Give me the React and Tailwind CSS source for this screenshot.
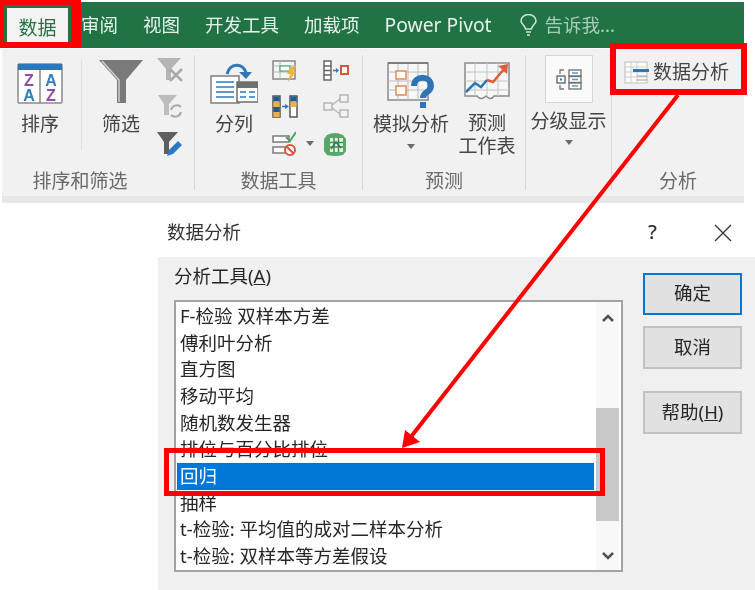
import React from "react";

const FONT = { fontFamily: '"Noto Sans", "Noto Sans CJK SC", sans-serif' };

const rows = [
  "F-检验 双样本方差",
  "傅利叶分析",
  "直方图",
  "移动平均",
  "随机数发生器",
  "排位与百分比排位",
  "回归",
  "抽样",
  "t-检验: 平均值的成对二样本分析",
  "t-检验: 双样本等方差假设",
];

const Caret = () => (
  <svg width="10" height="6" viewBox="0 0 10 6">
    <polygon points="1,0 9,0 5,5" fill="#6a6a6a" />
  </svg>
);

const SortIcon = () => (
  <svg width="46" height="41" viewBox="0 0 46 41">
    <rect x="1" y="1" width="44" height="39" rx="1" fill="#fff" stroke="#8a8a8a" strokeWidth="1.5" />
    <rect x="1" y="1" width="44" height="6" fill="#2f78b7" />
    <line x1="23" y1="7" x2="23" y2="40" stroke="#8a8a8a" strokeWidth="1.5" />
    <text x="12" y="23" textAnchor="middle" fontSize="16" fontWeight="700" fontFamily="Liberation Sans" fill="#8e4ea3">Z</text>
    <text x="12" y="38" textAnchor="middle" fontSize="16" fontWeight="700" fontFamily="Liberation Sans" fill="#2f7fc2">A</text>
    <text x="34" y="23" textAnchor="middle" fontSize="16" fontWeight="700" fontFamily="Liberation Sans" fill="#2f7fc2">A</text>
    <text x="34" y="38" textAnchor="middle" fontSize="16" fontWeight="700" fontFamily="Liberation Sans" fill="#8e4ea3">Z</text>
  </svg>
);

const FunnelIcon = () => (
  <svg width="44" height="44" viewBox="0 0 44 44">
    <polygon points="0,0 44,0 27,20 27,43 18,43 18,20" fill="#7a7a7a" />
    <polyline points="3,1 20,20 20,42" fill="none" stroke="#cfcfcf" strokeWidth="1.5" />
  </svg>
);

const ClearFilter = () => (
  <svg width="26" height="24" viewBox="0 0 26 24">
    <polygon points="0,0 24,0 14,11 14,22 9,22 9,11" fill="#b4b4b4" />
    <path d="M13 11 L25 23 M25 11 L13 23" stroke="#a8a8a8" strokeWidth="2.5" />
  </svg>
);

const RefreshFilter = () => (
  <svg width="26" height="24" viewBox="0 0 26 24">
    <polygon points="1,0 20,0 12,9 12,20 7,20 7,9" fill="#bcbcbc" />
    <path d="M14 15 a6 6 0 0 1 10 -3 M24 17 a6 6 0 0 1 -10 3" fill="none" stroke="#a8a8a8" strokeWidth="2" />
  </svg>
);

const EditFilter = () => (
  <svg width="26" height="26" viewBox="0 0 26 26">
    <polygon points="0,0 21,0 12,10 12,22 7,22 7,10" fill="#5f5f5f" />
    <path d="M10 24 L12 18 L21 9 L25 13 L16 22 Z" fill="#2f78c4" />
  </svg>
);

const TextToColumns = () => (
  <svg width="48" height="42" viewBox="0 0 48 42">
    <path d="M17 12 C20 1 33 0 36 11" fill="none" stroke="#2f78b7" strokeWidth="3" />
    <polygon points="29,10 42,10 36,17" fill="#2f78b7" />
    <rect x="1" y="14" width="28" height="27" fill="#fff" stroke="#7f7f7f" strokeWidth="1.5" />
    <path d="M6 20 H24 M6 25 H24 M6 30 H24 M6 35 H24" stroke="#2f78b7" strokeWidth="1.5" />
    <rect x="27" y="20" width="21" height="20" fill="#fff" stroke="#6f6f6f" strokeWidth="1.5" />
    <rect x="27" y="20" width="21" height="6" fill="#6f6f6f" />
    <path d="M30 30 H36 M39 30 H45 M30 35 H36 M39 35 H45" stroke="#5b9bd5" strokeWidth="2" />
  </svg>
);

const FlashFill = () => (
  <svg width="25" height="22" viewBox="0 0 25 22">
    <rect x="1" y="1" width="22" height="18" fill="#f5f5f5" stroke="#858585" strokeWidth="1.5" />
    <path d="M1 6 H23 M1 12 H23 M8 1 V19" stroke="#b5b5b5" />
    <rect x="8" y="6" width="10" height="5" fill="#fff" stroke="#2e9a62" />
    <polygon points="20,6 24,6 21,12 24,12 16,22 18,14 15,14" fill="#f0b33c" />
  </svg>
);

const RemoveDuplicates = () => (
  <svg width="26" height="23" viewBox="0 0 26 23">
    <rect x="1" y="1" width="7" height="21" fill="#fff" stroke="#555" strokeWidth="1.5" />
    <rect x="18" y="1" width="7" height="21" fill="#fff" stroke="#555" strokeWidth="1.5" />
    <rect x="1.5" y="1.5" width="6" height="5" fill="#1f5d93" />
    <rect x="1.5" y="7" width="6" height="5" fill="#efb04a" />
    <rect x="1.5" y="12" width="6" height="5" fill="#1f5d93" />
    <rect x="1.5" y="17" width="6" height="5" fill="#efb04a" />
    <rect x="18.5" y="1.5" width="6" height="5" fill="#1f5d93" />
    <rect x="18.5" y="7" width="6" height="5" fill="#efb04a" />
    <path d="M10 11.5 H14" stroke="#2f78b7" strokeWidth="1.5" />
    <polygon points="13,9 17,11.5 13,14" fill="#2f78b7" />
  </svg>
);

const Validation = () => (
  <svg width="24" height="25" viewBox="0 0 24 25">
    <rect x="1" y="5" width="16" height="6" fill="#fff" stroke="#7a7a7a" strokeWidth="1.5" />
    <rect x="1" y="16" width="16" height="6" fill="#fff" stroke="#7a7a7a" strokeWidth="1.5" />
    <path d="M14 6 L18 10 L24 1" fill="none" stroke="#4aa564" strokeWidth="2" />
    <circle cx="18" cy="19" r="5" fill="#fff" stroke="#d9553b" strokeWidth="2" />
    <path d="M14.5 15.5 L21.5 22.5" stroke="#d9553b" strokeWidth="2" />
  </svg>
);

const Consolidate = () => (
  <svg width="26" height="21" viewBox="0 0 26 21">
    <rect x="1" y="1" width="7" height="19" fill="#fff" stroke="#666" strokeWidth="1.5" />
    <path d="M1 6 H8 M1 10.5 H8 M1 15 H8" stroke="#666" strokeWidth="1.5" />
    <path d="M10 10.5 H14" stroke="#2f78b7" strokeWidth="1.5" />
    <polygon points="13,8 16,10.5 13,13" fill="#2f78b7" />
    <rect x="18" y="6" width="7" height="8" fill="#fff" stroke="#d9553b" strokeWidth="2" />
  </svg>
);

const Relations = () => (
  <svg width="26" height="25" viewBox="0 0 26 25">
    <g fill="#f3f3f3" stroke="#b5b5b5" strokeWidth="1.5">
      <rect x="1" y="9" width="8" height="7" />
      <rect x="17" y="1" width="8" height="7" />
      <rect x="17" y="16" width="8" height="7" />
    </g>
    <path d="M9 11 L17 5 M9 14 L17 20" stroke="#b5b5b5" strokeWidth="1.5" />
  </svg>
);

const DataModel = () => (
  <svg width="24" height="25" viewBox="0 0 24 25">
    <path d="M4 3 Q12 -1 20 3 L23 7 V19 L20 23 Q12 25 4 23 L1 19 V7 Z" fill="#56a868" />
    <path d="M7 6 H20 V20 H7 Z" fill="#e6f2e8" />
    <path d="M11 6 V20 M15.5 6 V20 M7 10.5 H20 M7 15 H20" stroke="#3f8f52" strokeWidth="1.5" />
    <path d="M8 17 L13 10 L18 16" fill="none" stroke="#2f7d44" strokeWidth="1.5" />
  </svg>
);

const WhatIf = () => (
  <svg width="48" height="47" viewBox="0 0 48 47">
    <rect x="1" y="1" width="40" height="37" fill="#f7f7f7" stroke="#8a8a8a" strokeWidth="1.5" />
    <path d="M1 10 H41 M1 19 H41 M1 28 H41 M11 1 V38 M21 1 V38 M31 1 V38" stroke="#bdbdbd" />
    <path d="M1 1 H41" stroke="#7f7f7f" strokeWidth="2" />
    <rect x="9" y="9" width="10" height="8" fill="#fff" stroke="#e58a4e" strokeWidth="1.5" />
    <rect x="9" y="24" width="10" height="9" fill="#fff" stroke="#e58a4e" strokeWidth="1.5" />
    <path d="M27 24 C27 13 44 13 44 24 C44 31 36 29 36 36" fill="none" stroke="#2e75b6" strokeWidth="6" />
    <rect x="33" y="40" width="6" height="6" fill="#2e75b6" />
  </svg>
);

const Forecast = () => (
  <svg width="46" height="42" viewBox="0 0 46 42">
    <path d="M1 1 H45 V34 H30 Q27 39 22 34 Q17 39 13 34 H1 Z" fill="#f7f7f7" stroke="#8a8a8a" strokeWidth="1.5" />
    <path d="M1 10 H45 M1 19 H45 M1 28 H45 M11 1 V34 M23 1 V34 M34 1 V34" stroke="#c4c4c4" />
    <path d="M2 30 L11 21 L17 25 L23 18" fill="none" stroke="#2e75b6" strokeWidth="2.5" />
    <path d="M23 18 L29 20 L41 6" fill="none" stroke="#d9603b" strokeWidth="2.5" />
    <polygon points="34,4 44,2 43,12" fill="#d9603b" />
  </svg>
);

const Outline = () => (
  <svg width="26" height="21" viewBox="0 0 26 21">
    <path d="M8 1 H4 V5 M8 20 H4 V16" fill="none" stroke="#7a7a7a" strokeWidth="1.3" />
    <rect x="1" y="7" width="8" height="7" fill="#fff" stroke="#5f5f5f" strokeWidth="1.3" />
    <rect x="4" y="9.5" width="2" height="2" fill="#2e75b6" />
    <g fill="#fff" stroke="#6f6f6f" strokeWidth="1.3">
      <rect x="13" y="1" width="12" height="6" />
      <rect x="13" y="7.5" width="12" height="6" />
      <rect x="13" y="14" width="12" height="6" />
    </g>
    <path d="M16 4 H22 M16 10.5 H22 M16 17 H22" stroke="#5b9bd5" strokeWidth="1.6" />
  </svg>
);

const AnalysisIcon = () => (
  <svg width="25" height="23" viewBox="0 0 25 23">
    <rect x="1" y="1" width="22" height="21" fill="#fbfbfb" stroke="#bdbdbd" />
    <path d="M1 6 H23 M1 11 H23 M1 16 H23 M7 1 V22 M13 1 V22" stroke="#cfcfcf" />
    <rect x="9" y="8" width="16" height="3" fill="#2e75b6" />
    <path d="M13 15 H23 M13 19 H23" stroke="#9a9a9a" />
  </svg>
);

const LargeBtn = ({ icon, label, className, iconBox }) => (
  <div className={`flex flex-col items-center ${className}`}>
    <div className={`flex items-start justify-center ${iconBox}`}>{icon}</div>
    <div className="leading-6 text-[19px] whitespace-nowrap text-[#444]">{label}</div>
  </div>
);

const Group = ({ label, className, labelClass = "", children }) => (
  <div className={`my-[6px] flex flex-col border-r border-[#d8d8d8] ${className}`}>
    <div className="flex-1 flex min-h-0">{children}</div>
    {label && (
      <div className={`h-6 leading-6 -mb-[3px] text-center text-[19px] text-[#6a6a6a] ${labelClass}`}>{label}</div>
    )}
  </div>
);

const Ribbon = () => (
  <div className="ml-[2px] mt-[2px] w-[742px]">
    <div className="h-[46px] bg-[#217346] flex items-end pl-[5px] text-[18.5px] text-[#e6f1ea]">
      <div className="w-[61px] h-[40px] bg-[#f3f3f3] text-[#217346] text-[19px] flex items-center justify-center">数据</div>
      <div className="ml-[13px] h-[46px] flex items-center gap-[25px] whitespace-nowrap">
        <span>审阅</span>
        <span>视图</span>
        <span>开发工具</span>
        <span>加载项</span>
        <span className="text-[19.3px]">Power Pivot</span>
        <span className="ml-[3px] flex items-center gap-[8px] text-[#a9cdb8]">
          <svg width="17" height="23" viewBox="0 0 17 23" fill="none" stroke="#cfe3d6" strokeWidth="1.5">
            <path d="M5.5 15 C5 11 1 10 1 7 a7.5 6.5 0 0 1 15 0 C16 10 12 11 11.5 15 Z" />
            <path d="M6 18 H11 M7 21 H10" />
          </svg>
          告诉我...
        </span>
      </div>
    </div>
    <div className="h-[147px] mt-[1px] bg-[#f1f1f1] flex">
      <Group label="排序和筛选" className="w-[193px]" labelClass="pr-[36px]">
        <LargeBtn icon={<SortIcon />} label="排序" className="ml-[8px] w-[60px] pt-[8px]" iconBox="h-[49px]" />
        <div className="ml-[11px] mt-[5px] h-[90px] w-px bg-[#dedede]" />
        <LargeBtn icon={<FunnelIcon />} label="筛选" className="ml-[9px] w-[60px] pt-[5px]" iconBox="h-[52px]" />
        <div className="ml-[6px] pt-[3px] flex flex-col gap-[13px]">
          <ClearFilter />
          <RefreshFilter />
          <EditFilter />
        </div>
      </Group>
      <Group label="数据工具" className="w-[168px]">
        <LargeBtn icon={<TextToColumns />} label="分列" className="ml-[9px] w-[60px] pt-[7px]" iconBox="h-[50px]" />
        <div className="ml-[8px] pt-[5px] flex flex-col gap-[13px]">
          <FlashFill />
          <RemoveDuplicates />
          <div className="flex items-center gap-[9px]">
            <Validation />
            <Caret />
          </div>
        </div>
        <div className="ml-[8px] pt-[5px] flex flex-col gap-[13px]">
          <Consolidate />
          <Relations />
          <DataModel />
        </div>
      </Group>
      <Group label="预测" className="w-[163px]">
        <div className="ml-[8px] w-[80px] pt-[7px] flex flex-col items-center">
          <div className="h-[50px]"><WhatIf /></div>
          <div className="leading-6 text-[19px] whitespace-nowrap text-[#444]">模拟分析</div>
          <div className="mt-[8px]"><Caret /></div>
        </div>
        <div className="ml-[6px] w-[60px] pt-[7px] flex flex-col items-center">
          <div className="h-[50px]"><Forecast /></div>
          <div className="leading-[23px] text-[19px] text-center text-[#444]">预测<br />工作表</div>
        </div>
      </Group>
      <Group className="w-[86px]">
        <div className="w-full flex flex-col items-center">
          <div className="w-[48px] h-[48px] bg-[#fafafa] border border-[#d6d6d6] flex items-center justify-center"><Outline /></div>
          <div className="mt-[6px] leading-6 text-[19px] whitespace-nowrap text-[#444]">分级显示</div>
          <div className="mt-[7px]"><Caret /></div>
        </div>
      </Group>
      <div className="flex-1 my-[6px] flex flex-col">
        <div className="flex-1 pl-[12px] pt-[5px]">
          <div className="flex items-center gap-[4px] text-[19px] text-[#444] whitespace-nowrap h-[24px]">
            <AnalysisIcon />
            数据分析
          </div>
        </div>
        <div className="h-6 leading-6 -mb-[3px] text-center text-[19px] text-[#6a6a6a]">分析</div>
      </div>
    </div>
    <div className="h-[7px] bg-[#e6e6e6]" />
  </div>
);

const Chevron = ({ down }) => (
  <svg width="14" height="10" viewBox="0 0 14 10">
    <polyline points={down ? "2,2 7,7 12,2" : "2,8 7,3 12,8"} fill="none" stroke="#505050" strokeWidth="2.5" />
  </svg>
);

const Dialog = () => (
  <div className="ml-[158px]">
    <div className="h-[54px] pt-[17px] flex items-start text-[18.5px] text-[#333]">
      <span className="ml-[9px] leading-6">数据分析</span>
      <span className="ml-[407px] leading-6 text-[20px] font-medium">?</span>
      <svg className="ml-[57px] mt-[4px]" width="18" height="18" viewBox="0 0 18 18">
        <path d="M1 1 L17 17 M17 1 L1 17" stroke="#333" strokeWidth="1.3" />
      </svg>
    </div>
    <div className="h-[334px] bg-[#f0f0f0] flex text-[18.5px] text-[#262626]">
      <div className="ml-[16px] w-[449px]">
        <div className="mt-[7px] h-[36px] leading-6">分析工具(<span className="underline">A</span>)</div>
        <div className="h-[272px] border-2 border-[#a3a3a3] bg-white flex">
          <div className="flex-1 pt-px pr-[2px] pl-px min-w-0">
            {rows.map((row, i) => (
              <div
                key={row}
                className={`h-[26.67px] leading-[26px] pl-[3px] whitespace-nowrap ${i === 6 ? "bg-[#0078d7] text-white outline-1 outline-dotted outline-[#555] -outline-offset-1" : ""}`}
              >
                {row}
              </div>
            ))}
          </div>
          <div className="w-[23px] mr-[2px] bg-[#f8f8f8] flex flex-col items-center">
            <div className="h-[32px] flex items-center justify-center"><Chevron /></div>
            <div className="mt-[74px] h-[113px] w-full bg-[#c9c9c9]" />
            <div className="mt-auto h-[28px] flex items-center justify-center"><Chevron down /></div>
          </div>
        </div>
      </div>
      <div className="ml-[20px] w-[99px] pt-[16px] flex flex-col">
        <div className="h-[42px] pb-[2px] bg-[#e1e1e1] border-2 border-[#0078d7] flex items-center justify-center">确定</div>
        <div className="mt-[11px] h-[43px] pb-[2px] bg-[#e1e1e1] border-2 border-[#c2c2c2] flex items-center justify-center">取消</div>
        <div className="mt-[22px] h-[43px] pb-[2px] bg-[#e1e1e1] border-2 border-[#c2c2c2] flex items-center justify-center">
          帮助(<span className="underline">H</span>)
        </div>
      </div>
    </div>
  </div>
);

export default function App() {
  return (
    <div className="relative w-[755px] h-[590px] overflow-hidden bg-white blur-[0.4px]" style={FONT}>
      <Ribbon />
      <Dialog />
      {/* red callouts drawn on top of the screenshot */}
      <div className="absolute left-0 top-0 w-[81px] h-[48px] border-[#ff0000] border-l-[4px] border-t-[5px] border-r-[10px] border-b-[6px]" />
      <div className="absolute left-[610px] top-[43px] w-[137px] h-[52px] border-[6px] border-[#ff0000]" />
      <div className="absolute left-[164px] top-[448px] w-[441px] h-[48px] border-[5px] border-[#ff0000]" />
      <svg className="absolute left-0 top-0" width="755" height="590" viewBox="0 0 755 590">
        <line x1="678" y1="95" x2="410" y2="438" stroke="#ff0000" strokeWidth="4" />
        <polygon points="402,448 405,430 420,442" fill="#ff0000" />
      </svg>
    </div>
  );
}
